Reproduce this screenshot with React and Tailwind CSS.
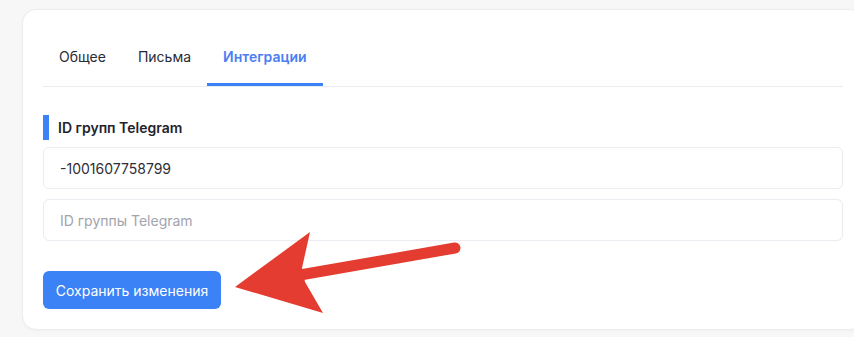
import React, { useState } from "react";

const tabs = ["Общее", "Письма", "Интеграции"];

export default function App() {
  const [active, setActive] = useState(2);
  const [groupId, setGroupId] = useState("-1001607758799");
  const [newId, setNewId] = useState("");

  return (
    <div
      className="relative h-[337px] w-[854px] overflow-hidden bg-[#f7f7f8] pt-[9px] pl-[22px]"
      style={{ fontFamily: "Inter, 'Noto Sans', sans-serif" }}
    >
      {/* Card */}
      <div className="w-[842px] rounded-[14px] border border-[#ececf1] bg-white px-5 pt-[16px] pb-[20px] shadow-[0_1px_3px_rgba(0,0,0,0.03)]">
        {/* Tabs */}
        <div className="flex border-b border-[#ebebf2]">
          {tabs.map((t, i) => (
            <button
              key={t}
              onClick={() => setActive(i)}
              className={`relative flex h-[60px] items-center px-4 text-[14px] ${
                active === i ? "font-semibold text-[#4c7ef3]" : "text-[#2a2a35]"
              }`}
            >
              {t}
              {active === i && (
                <span className="absolute right-0 bottom-0 left-0 h-[3px] bg-[#3b82f6]" />
              )}
            </button>
          ))}
        </div>

        {/* Section */}
        <div className="mt-[28px] flex h-[25px] items-center gap-[9px]">
          <span className="h-full w-[6px] bg-[#3b82f6]" />
          <h2 className="text-[14px] font-semibold text-[#23232d]">ID групп Telegram</h2>
        </div>

        <div className="mt-[7px] flex flex-col gap-[10px]">
          <input
            value={groupId}
            onChange={(e) => setGroupId(e.target.value)}
            className="h-[42px] w-full rounded-[6px] border border-[#ebebf2] px-[16px] text-[14px] text-[#2e2e38] outline-none"
          />
          <input
            value={newId}
            placeholder="ID группы Telegram"
            onChange={(e) => setNewId(e.target.value)}
            className="h-[42px] w-full rounded-[6px] border border-[#ebebf2] px-[16px] text-[14px] text-[#2e2e38] placeholder-[#a3a3ad] outline-none"
          />
        </div>

        <button className="mt-[30px] h-[38px] w-[178px] rounded-[6px] bg-[#3b82f6] text-[14px] text-white">
          Сохранить изменения
        </button>
      </div>

      {/* Red annotation arrow */}
      <svg
        className="pointer-events-none absolute top-0 left-0"
        width="854"
        height="337"
        viewBox="0 0 854 337"
      >
        <line
          x1="455"
          y1="248"
          x2="300"
          y2="275"
          stroke="#e43c30"
          strokeWidth="11"
          strokeLinecap="round"
        />
        <polygon points="235,287 310,232 302,268 305,282 323,313" fill="#e43c30" />
      </svg>
    </div>
  );
}
